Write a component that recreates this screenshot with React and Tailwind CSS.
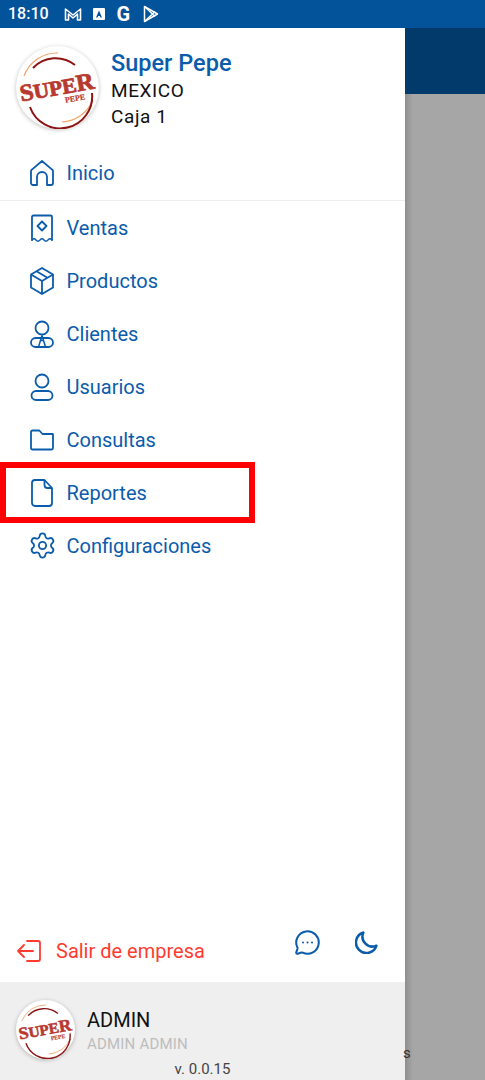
import React from 'react';
import { Settings, MessageCircleMore } from 'lucide-react';

const HouseIcon = ({ className }) => (
  <svg viewBox="0 0 24 26" className={className} fill="none" stroke="currentColor" strokeWidth="1.800" strokeLinejoin="round">
    <path d="M12 1l10.100 8.600a2 2 0 0 1 .9 1.700V23a2 2 0 0 1-2 2h-4V17a5 5 0 0 0-10 0v8H3a2 2 0 0 1-2-2V11.300a2 2 0 0 1 .9-1.700z" />
  </svg>
);

const ReceiptIcon = ({ className }) => (
  <svg viewBox="0 0 24 28" className={className} fill="none" stroke="currentColor" strokeWidth="1.800" strokeLinejoin="round" strokeLinecap="round">
    <path d="M2 26V3a1.500 1.500 0 0 1 1.500-1.500h17A1.500 1.500 0 0 1 22 3v23" />
    <path d="M2 26c1.500-1.600 2.500-1.600 4 0s2.500 1.600 4 0 2.500-1.600 4 0 2.500 1.600 4 0 2.500-1.600 4 0" strokeWidth="1.400" />
    <path d="M12 7.500l4.500 4.500-4.500 4.500-4.500-4.500z" />
  </svg>
);

const BoxIcon = ({ className }) => (
  <svg viewBox="0 0 24 28" className={className} fill="none" stroke="currentColor" strokeWidth="1.800" strokeLinejoin="round">
    <path d="M12 1l11 6.500v13L12 27 1 20.500v-13z" />
    <path d="M1 7.500L12 14l11-6.500M12 14v13M6.500 4.200l11 6.500" />
  </svg>
);

const ClientIcon = ({ className }) => (
  <svg viewBox="0 0 24 28" className={className} fill="none" stroke="currentColor" strokeWidth="1.800" strokeLinejoin="round">
    <circle cx="12" cy="8" r="6.500" />
    <rect x="1" y="18" width="22" height="9" rx="4.500" />
    <path d="M12 15.500L8.500 27M12 15.500L15.500 27M9.800 20.500h4.400" strokeWidth="1.500" />
  </svg>
);

const UserIcon = ({ className }) => (
  <svg viewBox="0 0 24 28" className={className} fill="none" stroke="currentColor" strokeWidth="1.800" strokeLinejoin="round">
    <circle cx="12" cy="8" r="6.500" />
    <rect x="1.500" y="18" width="21" height="9" rx="4.500" />
  </svg>
);

const FolderIcon = ({ className }) => (
  <svg viewBox="0 0 24 28" className={className} fill="none" stroke="currentColor" strokeWidth="1.800" strokeLinejoin="round">
    <path d="M1 6a1.500 1.500 0 0 1 1.500-1.500h6.800L12.500 8h10a.5.5 0 0 1 .5.5V22a1.500 1.500 0 0 1-1.500 1.500h-19A1.500 1.500 0 0 1 1 22z" />
  </svg>
);

const FileIcon = ({ className }) => (
  <svg viewBox="0 0 24 28" className={className} fill="none" stroke="currentColor" strokeWidth="1.800" strokeLinejoin="round">
    <path d="M2 4a3 3 0 0 1 3-3h9.500L22 9v15a3 3 0 0 1-3 3H5a3 3 0 0 1-3-3z" />
    <path d="M14.500 1v5a3 3 0 0 0 3 3H22" />
  </svg>
);

const GearIcon = ({ className }) => (
  <span className={`${className} flex items-center justify-center`}>
    <Settings className="w-[29px] h-[29px] shrink-0" strokeWidth={1.500} />
  </span>
);

const ExitIcon = ({ className }) => (
  <svg viewBox="0 0 24 22" className={className} fill="none" stroke="currentColor" strokeWidth="1.800" strokeLinecap="round" strokeLinejoin="round">
    <path d="M10 1h11a2 2 0 0 1 2 2v16a2 2 0 0 1-2 2H10" />
    <path d="M1 11h15M7 5l-6 6 6 6" />
  </svg>
);

const MoonIcon = ({ className }) => (
  <svg viewBox="0 0 22 22" className={className} fill="none" stroke="currentColor" strokeWidth="2.400" strokeLinejoin="round">
    <path d="M8 1.500A10 10 0 1 0 20.500 14 9.500 9.500 0 0 1 8 1.500z" />
  </svg>
);

// logo de la empresa, el texto va como texto real
const Logo = ({ size }) => (
  <div className="rounded-full bg-white shadow-[0_1px_4px_rgba(0,0,0,0.25)] shrink-0" style={{ width: size, height: size }}>
    <svg viewBox="0 0 83 83" width={size} height={size}>
      <path d="M8 30A35 35 0 0 1 42 7" fill="none" stroke="#f2a36b" strokeWidth="1.200" />
      <path d="M77 54A36 36 0 0 1 46 76" fill="none" stroke="#f2a36b" strokeWidth="1.200" />
      <path d="M17 22A31 31 0 0 1 59 19" fill="none" stroke="#8e1414" strokeWidth="2" />
      <path d="M76 47A32 32 0 0 1 14 61" fill="none" stroke="#8e1414" strokeWidth="2" />
      <g transform="rotate(-10 41 42)" fontFamily="'Liberation Serif', serif" fontWeight="700" fill="#b8392f" stroke="#b8392f">
        <text x="41" y="49" textAnchor="middle" fontSize="21" strokeWidth="0.800" textLength="75" lengthAdjust="spacingAndGlyphs">
          <tspan fontSize="24">S</tspan>UPE<tspan fontSize="24">R</tspan>
        </text>
        <text x="57" y="58" textAnchor="middle" fontSize="8" strokeWidth="0.200">PEPE</text>
      </g>
    </svg>
  </div>
);

const menu = [
  { label: 'Ventas', icon: ReceiptIcon },
  { label: 'Productos', icon: BoxIcon },
  { label: 'Clientes', icon: ClientIcon },
  { label: 'Usuarios', icon: UserIcon },
  { label: 'Consultas', icon: FolderIcon },
  { label: 'Reportes', icon: FileIcon },
  { label: 'Configuraciones', icon: GearIcon },
];

const MenuRow = ({ label, icon: Icon }) => (
  <div className="h-[53px] flex items-center pl-[30px] text-[#0b5cab]">
    <Icon className="w-[24px] h-[28px]" />
    <span className="ml-[12.500px] text-[20px]">{label}</span>
  </div>
);

export default function App() {
  return (
    <div className="relative w-[485px] h-[1080px] overflow-hidden flex flex-col font-['Roboto',sans-serif]">
      {/* barra de estado */}
      <div className="h-[28px] bg-[#03539b] flex items-center pl-[8px] text-white shrink-0">
        <span className="text-[16px] font-medium">18:10</span>
        <div className="flex items-center ml-[15px]">
          <svg viewBox="0 0 18 14" className="w-[18px] h-[14px]" fill="none" stroke="white" strokeWidth="1.600" strokeLinejoin="round">
            <path d="M1.500 13V2l7.500 6 7.500-6v11h-3V7L9 11 4.500 7v6z" />
          </svg>
          <svg viewBox="0 0 12 12" className="w-[12px] h-[12px] ml-[11px]">
            <rect width="12" height="12" rx="1" fill="white" />
            <path d="M6 2.500L3 9.500h1.500l.6-1.500h1.800l.6 1.500H9z" fill="#03539b" />
          </svg>
          <span className="ml-[12px] text-[20px] leading-none font-bold w-[15px]">G</span>
          <svg viewBox="0 0 16 18" className="w-[16px] h-[18px] ml-[11px]" fill="none" stroke="white" strokeWidth="1.500" strokeLinejoin="round">
            <path d="M1.500 1.500L14.500 9 1.500 16.500z" />
            <path d="M1.500 1.500L9.500 9l-8 7.500M9.500 9l2.500-2.500M9.500 9l2.500 2.500" />
          </svg>
        </div>
      </div>

      <div className="flex flex-1 min-h-0">
        {/* menu lateral */}
        <div className="w-[405px] bg-white flex flex-col shrink-0">
          <div className="flex items-start pl-[16px] pt-[18px] h-[119px] shrink-0">
            <Logo size={83} />
            <div className="ml-[12px] mt-[3px]">
              <div className="text-[23.500px] leading-[29px] font-medium text-[#0b5cab]">Super Pepe</div>
              <div className="text-[19px] leading-[26px] text-[#111] tracking-[0.6px]">MEXICO</div>
              <div className="text-[19px] leading-[26px] text-[#111] tracking-[0.6px]">Caja 1</div>
            </div>
          </div>

          <div className="h-[54px] flex items-center pl-[30px] pb-[1px] text-[#0b5cab] border-b border-[#eeeeee] shrink-0">
            <HouseIcon className="w-[24px] h-[26px]" />
            <span className="ml-[12.500px] text-[20px]">Inicio</span>
          </div>

          {menu.map((item) => (
            <MenuRow key={item.label} {...item} />
          ))}

          <div className="flex-1" />

          <div className="flex items-start h-[52px] pl-[17px] shrink-0">
            <div className="flex items-center mt-[6px] text-[#ff3b30]">
              <ExitIcon className="w-[24px] h-[22px]" />
              <span className="ml-[15px] text-[20px]">Salir de empresa</span>
            </div>
            <div className="flex items-center ml-auto mr-[27px] -mt-[1px] text-[#0b5cab]">
              <MessageCircleMore className="w-[27px] h-[27px]" strokeWidth={1.800} />
              <MoonIcon className="w-[23px] h-[23px] ml-[34px]" />
            </div>
          </div>

          <div className="h-[98px] bg-[#efefef] relative shrink-0 pl-[16px] pt-[18px] flex">
            <Logo size={59} />
            <div className="ml-[12px] pt-[7px]">
              <div className="text-[20px] leading-[26px] text-[#111]">ADMIN</div>
              <div className="text-[15px] leading-[22px] text-[#bdbdbd] tracking-[0.2px]">ADMIN ADMIN</div>
            </div>
            <div className="absolute bottom-[1px] left-0 right-0 text-center text-[15px] leading-[20px] text-[#444]">v. 0.0.15</div>
          </div>
        </div>

        {/* pantalla detras del menu */}
        <div className="flex-1 flex flex-col bg-[#a6a6a6] bg-gradient-to-r from-[#8f8f8f] to-[#a6a6a6] bg-[length:8px_100%] bg-no-repeat relative">
          <div className="h-[66px] bg-[#033a6c]" />
          <span className="absolute left-0 top-[1014px] text-[15px] text-[#333] -translate-x-[2px]">s</span>
        </div>
      </div>

      {/* recuadro rojo de la captura */}
      <div className="absolute left-0 top-[462px] w-[255px] h-[61px] border-[6px] border-[#ff0000]" />
    </div>
  );
}
